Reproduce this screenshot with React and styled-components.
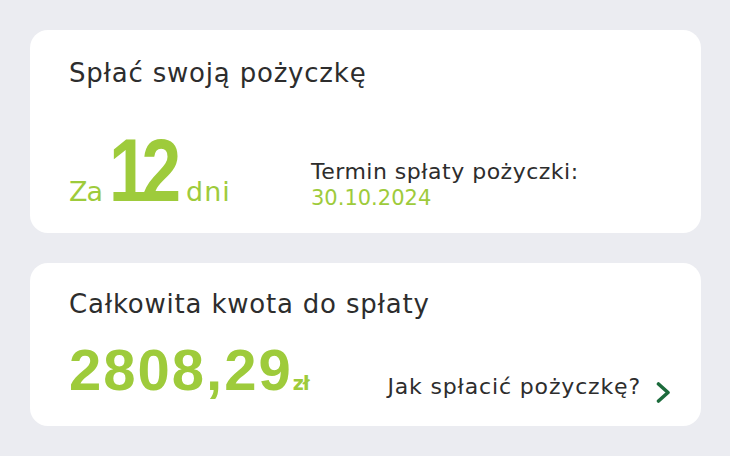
import React from "react";
import styled, { createGlobalStyle } from "styled-components";

const Global = createGlobalStyle`
  html, body { margin: 0; padding: 0; background: #ebecf1; }
  body { font-family: "DejaVu Sans", "Open Sans", sans-serif; }
`;

const green = "#9ecb3b";
const ink = "#2d2d2d";

const Page = styled.div`
  width: 730px;
  height: 456px;
  box-sizing: border-box;
  padding: 30px 29px 30px 30px;
  display: flex;
  flex-direction: column;
  gap: 30px;
  background: #ebecf1;
`;

const Card = styled.section`
  background: #ffffff;
  border-radius: 18px;
  box-sizing: border-box;
  height: ${(p) => p.$h}px;
  padding: ${(p) => p.$pad};
  display: flex;
  flex-direction: column;
`;

const Title = styled.h2`
  margin: 0;
  font-family: "DejaVu Sans", sans-serif;
  font-weight: 400;
  font-size: 26px;
  line-height: 32px;
  letter-spacing: 0.8px;
  color: ${ink};
`;

const Row = styled.div`
  margin-top: auto;
  display: flex;
  align-items: flex-end;
  justify-content: ${(p) => p.$justify || "flex-start"};
`;

const Countdown = styled.div`
  display: flex;
  align-items: baseline;
  color: ${green};
  width: 242px;
  flex-shrink: 0;
`;

const Small = styled.span`
  font-family: "DejaVu Sans", sans-serif;
  font-size: 27px;
  line-height: 1;
  letter-spacing: ${(p) => p.$ls ?? -1}px;
  margin-left: ${(p) => p.$ml || 0}px;
`;

const Big = styled.span`
  display: inline-block;
  font-family: "Liberation Sans", sans-serif;
  font-weight: 700;
  font-size: 89px;
  line-height: 70px;
  letter-spacing: -9px;
  margin-left: 7px;
  transform: scaleX(0.8);
  transform-origin: left bottom;
`;

const Due = styled.div`
  display: flex;
  flex-direction: column;
  font-family: "DejaVu Sans", sans-serif;
  margin-bottom: -5.5px;
`;

const DueLabel = styled.span`
  color: ${ink};
  font-size: 22px;
  line-height: 27px;
  letter-spacing: 0.5px;
`;

const DueDate = styled.span`
  color: ${green};
  font-size: 21px;
  line-height: 26px;
`;

const Amount = styled.div`
  display: flex;
  align-items: baseline;
  color: ${green};
`;

const AmountValue = styled.span`
  font-family: "Liberation Sans", sans-serif;
  font-weight: 700;
  font-size: 58px;
  line-height: 56px;
  letter-spacing: 2px;
`;

const Currency = styled.span`
  font-family: "DejaVu Sans", sans-serif;
  font-weight: 700;
  font-size: 19px;
  letter-spacing: -1px;
`;

const HowLink = styled.a`
  display: flex;
  align-items: center;
  gap: 15px;
  font-family: "DejaVu Sans", sans-serif;
  font-size: 22px;
  line-height: 28px;
  letter-spacing: 0.85px;
  color: ${ink};
  text-decoration: none;
  margin-bottom: -4.5px;
`;

const ChevronIcon = styled.svg`
  margin-top: 10px;
  flex-shrink: 0;
`;

const Chevron = () => (
  <ChevronIcon width="15" height="21" viewBox="0 0 15 21" fill="none">
    <path d="M2.5 2 L12 10.5 L2.5 19" stroke="#1c6b3c" strokeWidth="3.6" strokeLinecap="round" strokeLinejoin="round" />
  </ChevronIcon>
);

export default function App() {
  return (
    <>
      <Global />
      <Page>
        <Card $h={203} $pad="27px 39px 28px">
          <Title>Spłać swoją pożyczkę</Title>
          <Row>
            <Countdown>
              <Small>Za</Small>
              <Big>12</Big>
              <Small $ml={-4} $ls={1}>dni</Small>
            </Countdown>
            <Due>
              <DueLabel>Termin spłaty pożyczki:</DueLabel>
              <DueDate>30.10.2024</DueDate>
            </Due>
          </Row>
        </Card>
        <Card $h={163} $pad="25px 30px 28px 39px">
          <Title>Całkowita kwota do spłaty</Title>
          <Row $justify="space-between">
            <Amount>
              <AmountValue>2808,29</AmountValue>
              <Currency>zł</Currency>
            </Amount>
            <HowLink href="#">
              Jak spłacić pożyczkę?
              <Chevron />
            </HowLink>
          </Row>
        </Card>
      </Page>
    </>
  );
}
